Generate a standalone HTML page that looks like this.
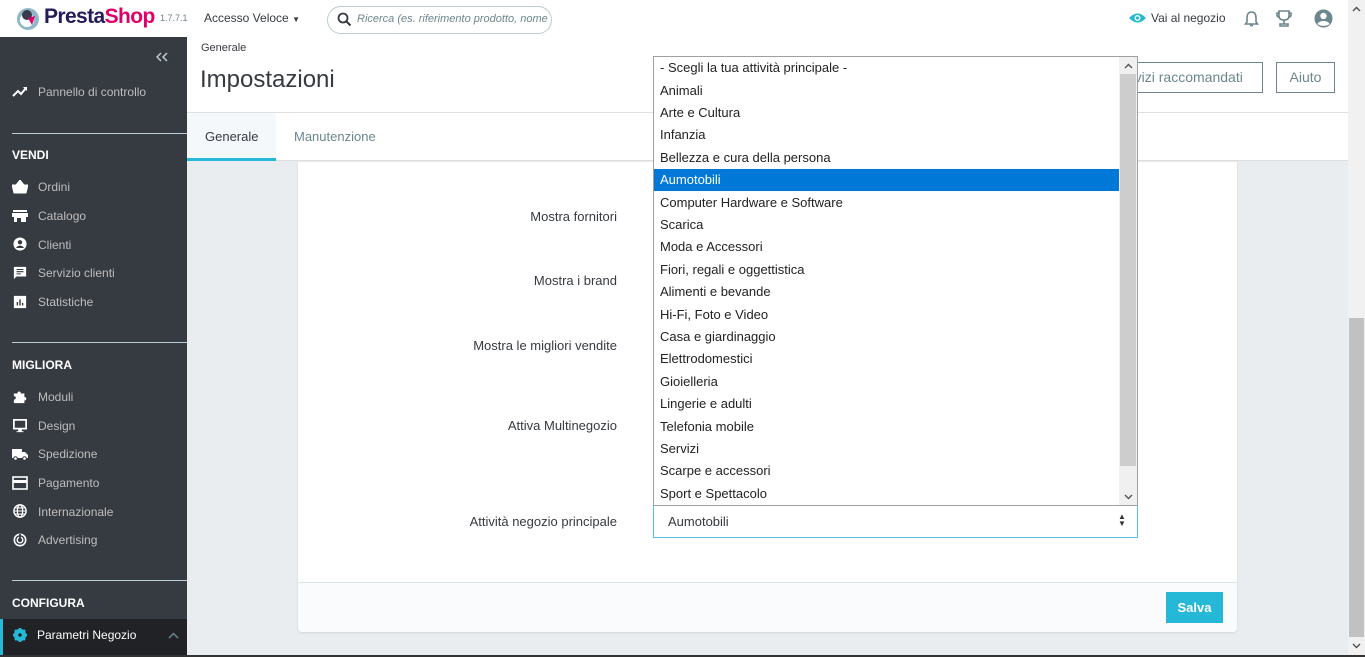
<!DOCTYPE html>
<html><head><meta charset="utf-8"><style>
*{box-sizing:border-box;margin:0;padding:0}
body{width:1365px;height:657px;overflow:hidden;position:relative;background:#eaedef;font-family:"Liberation Sans",sans-serif;color:#363a41}
.a{position:absolute}
.side{left:0;top:37px;width:187px;height:620px;background:#363a41}
.si{position:absolute;left:38px;font-size:12px;color:#bebebe}
.ic{position:absolute;left:12px;width:16px;height:14px;fill:#fff}
.sh{position:absolute;left:12px;font-size:12px;font-weight:bold;color:#fff}
.hr{position:absolute;left:12px;width:175px;height:1px;background:#bbcdd2}
.lab{position:absolute;right:748px;font-size:13px;color:#363a41;white-space:nowrap}
.dd{left:653px;top:56px;width:485px;height:450px;background:#fff;border:1px solid #a0a0a0}
.opt{position:absolute;left:6px;font-size:13px;color:#222;font-family:"Liberation Sans",sans-serif}
</style></head><body>
<div class="a" style="left:0;top:0;width:1348px;height:37px;background:#fff"></div>
<svg class="a" style="left:16px;top:7px" width="24" height="24" viewBox="0 0 24 24"><circle cx="12" cy="12" r="11" fill="#8fb8c7"/><circle cx="11" cy="13" r="7" fill="#fff"/><circle cx="11" cy="8" r="5" fill="#3a3a48"/><path d="M12 11 L19 9 L16 18 Z" fill="#df0067"/></svg>
<div class="a" style="left:44px;top:5px;font-size:21px;font-weight:bold;letter-spacing:-0.6px"><span style="color:#251b5b">Presta</span><span style="color:#df0067">Shop</span></div>
<div class="a" style="left:160px;top:13px;font-size:9px;color:#6c868e">1.7.7.1</div>
<div class="a" style="left:204px;top:11px;font-size:12px;color:#363a41">Accesso Veloce <span style="font-size:8px">▼</span></div>
<div class="a" style="left:327px;top:6px;width:225px;height:28px;border:1px solid #bbcdd2;border-radius:14px;background:#fff"></div>
<svg class="a" style="left:337px;top:12px" width="15" height="15" viewBox="0 0 15 15"><circle cx="6" cy="6" r="4.5" fill="none" stroke="#363a41" stroke-width="1.8"/><path d="M9.5 9.5 L13.5 13.5" stroke="#363a41" stroke-width="2"/></svg>
<div class="a" style="left:357px;top:13px;font-size:11px;font-style:italic;color:#6c868e;white-space:nowrap">Ricerca (es. riferimento prodotto, nome</div>
<svg class="a" style="left:1129px;top:12px" width="17" height="12" viewBox="0 0 17 12"><path d="M0 6 Q8.5 -3 17 6 Q8.5 15 0 6Z" fill="#25b9d7"/><circle cx="8.5" cy="6" r="3" fill="#fff"/><circle cx="8.5" cy="6" r="1.6" fill="#25b9d7"/></svg>
<div class="a" style="left:1151px;top:11px;font-size:12px;color:#363a41">Vai al negozio</div>
<svg class="a" style="left:1244px;top:10px" width="15" height="18" viewBox="0 0 15 18"><path d="M7.5 2 C4 2 3 5 3 8 V12 L1.5 14 H13.5 L12 12 V8 C12 5 11 2 7.5 2Z" fill="none" stroke="#6c868e" stroke-width="1.6"/><path d="M6 15.5 h3" stroke="#6c868e" stroke-width="1.6"/></svg>
<svg class="a" style="left:1276px;top:10px" width="16" height="18" viewBox="0 0 16 18"><path d="M3 1 H13 V6 C13 9 11 10 8 10 C5 10 3 9 3 6Z M3 3 H1 V5 C1 7 3 7 3 7 M13 3 H15 V5 C15 7 13 7 13 7 M8 10 V14 M4 16 H12 V14 H4Z" fill="none" stroke="#6c868e" stroke-width="1.6"/></svg>
<svg class="a" style="left:1314px;top:9px" width="19" height="19" viewBox="0 0 19 19"><circle cx="9.5" cy="9.5" r="9" fill="#6c868e"/><circle cx="9.5" cy="7" r="3.2" fill="#fff"/><path d="M3.5 15 C5 11 14 11 15.5 15 C13 17.5 6 17.5 3.5 15Z" fill="#fff"/></svg>
<div class="a side">
<svg class="a" style="left:156px;top:15px" width="12" height="10" viewBox="0 0 12 10"><path d="M5 1 L1 5 L5 9 M11 1 L7 5 L11 9" fill="none" stroke="#bbcdd2" stroke-width="1.5"/></svg>
<svg class="ic" style="top:48px" viewBox="0 0 16 14"><path d="M1 11 L6 6 L9 9 L14 3" fill="none" stroke="#fff" stroke-width="2"/><path d="M11 2 H15 V6Z" fill="#fff"/></svg>
<div class="si" style="top:48px">Pannello di controllo</div>
<div class="hr" style="top:96px"></div>
<div class="sh" style="top:111px">VENDI</div>
<svg class="ic" style="top:143px" viewBox="0 0 16 14"><path d="M0 5 H16 L14 13 H2Z M4 5 L8 0 L12 5" fill="#fff" stroke="#fff"/></svg><div class="si" style="top:143px">Ordini</div>
<svg class="ic" style="top:172px" viewBox="0 0 16 14"><path d="M1 1 H15 V3 H1Z M0 4 H16 V8 H14 V13 H9 V9 H5 V13 H2 V8 H0Z" fill="#fff"/></svg><div class="si" style="top:172px">Catalogo</div>
<svg class="ic" style="top:200px" viewBox="0 0 16 16"><circle cx="8" cy="8" r="7.5" fill="#fff"/><circle cx="8" cy="6" r="2.5" fill="#363a41"/><path d="M3.5 12.5 C5 9 11 9 12.5 12.5Z" fill="#363a41"/></svg><div class="si" style="top:201px">Clienti</div>
<svg class="ic" style="top:229px" viewBox="0 0 16 16"><path d="M1 1 H15 V12 H4 L1 15Z" fill="#fff"/><path d="M4 4 H12 M4 6.5 H12 M4 9 H9" stroke="#363a41" stroke-width="1.2"/></svg><div class="si" style="top:229px">Servizio clienti</div>
<svg class="ic" style="top:258px" viewBox="0 0 16 16"><rect x="1" y="1" width="14" height="14" fill="#fff"/><path d="M5 12 V8 M8 12 V5 M11 12 V9" stroke="#363a41" stroke-width="1.6"/></svg><div class="si" style="top:258px">Statistiche</div>
<div class="hr" style="top:305px"></div>
<div class="sh" style="top:321px">MIGLIORA</div>
<svg class="ic" style="top:353px" viewBox="0 0 16 16"><path d="M1 4 H5 C5 1 9 1 9 4 H13 V8 C16 8 16 12 13 12 V15 H1 V11 C4 11 4 7 1 7Z" fill="#fff"/></svg><div class="si" style="top:353px">Moduli</div>
<svg class="ic" style="top:382px" viewBox="0 0 16 16"><rect x="1" y="1" width="14" height="10" fill="none" stroke="#fff" stroke-width="2"/><path d="M6 12 H10 V14 H12 V15 H4 V14 H6Z" fill="#fff"/></svg><div class="si" style="top:382px">Design</div>
<svg class="ic" style="top:410px" viewBox="0 0 16 14"><path d="M0 2 H10 V11 H0Z M10 5 H13 L16 8 V11 H10Z" fill="#fff"/><circle cx="3.5" cy="11.5" r="1.8" fill="#fff" stroke="#363a41"/><circle cx="12.5" cy="11.5" r="1.8" fill="#fff" stroke="#363a41"/></svg><div class="si" style="top:410px">Spedizione</div>
<svg class="ic" style="top:439px" viewBox="0 0 16 14"><rect x="1" y="1" width="14" height="12" fill="none" stroke="#fff" stroke-width="1.6"/><rect x="1" y="4" width="14" height="3" fill="#fff"/></svg><div class="si" style="top:439px">Pagamento</div>
<svg class="ic" style="top:467px" viewBox="0 0 16 16"><circle cx="8" cy="8" r="7" fill="none" stroke="#fff" stroke-width="1.6"/><ellipse cx="8" cy="8" rx="3" ry="7" fill="none" stroke="#fff" stroke-width="1.4"/><path d="M1 8 H15 M2 4.5 H14 M2 11.5 H14" stroke="#fff" stroke-width="1.2"/></svg><div class="si" style="top:468px">Internazionale</div>
<svg class="ic" style="top:496px" viewBox="0 0 16 16"><circle cx="8" cy="8" r="6.5" fill="none" stroke="#fff" stroke-width="1.8"/><circle cx="8" cy="8" r="3.2" fill="none" stroke="#fff" stroke-width="1.6"/><path d="M8 8 V1" stroke="#363a41" stroke-width="2"/></svg><div class="si" style="top:496px">Advertising</div>
<div class="hr" style="top:543px"></div>
<div class="sh" style="top:559px">CONFIGURA</div>
<div class="a" style="left:0;top:582px;width:187px;height:36px;background:#202226"></div>
<div class="a" style="left:0;top:582px;width:3px;height:36px;background:#25b9d7"></div>
<svg class="ic" style="top:591px" viewBox="0 0 16 16"><circle cx="8" cy="8" r="5" fill="none" stroke="#25b9d7" stroke-width="4"/><path d="M8 0 V16 M0 8 H16 M2.3 2.3 L13.7 13.7 M13.7 2.3 L2.3 13.7" stroke="#25b9d7" stroke-width="3"/><circle cx="8" cy="8" r="2" fill="#202226"/></svg>
<div class="si" style="left:37px;top:591px;color:#fff">Parametri Negozio</div>
<svg class="a" style="left:168px;top:595px" width="11" height="7" viewBox="0 0 11 7"><path d="M1 6 L5.5 1.5 L10 6" fill="none" stroke="#6c868e" stroke-width="1.5"/></svg>
</div>
<div class="a" style="left:187px;top:37px;width:1161px;height:124px;background:#fff;border-bottom:1px solid #dfdfdf"></div>
<div class="a" style="left:187px;top:112px;width:1161px;height:1px;background:#dfdfdf"></div>
<div class="a" style="left:201px;top:42px;font-size:11px">Generale</div>
<div class="a" style="left:200px;top:66px;font-size:24px;color:#363a41">Impostazioni</div>
<div class="a" style="left:1110px;top:62px;width:153px;height:31px;border:1px solid #6c868e"></div>
<div class="a" style="left:1130px;top:69px;font-size:14px;color:#6c868e">rvizi raccomandati</div>
<div class="a" style="left:1276px;top:62px;width:59px;height:31px;border:1px solid #6c868e;color:#6c868e;font-size:14px;text-align:center;line-height:29px">Aiuto</div>
<div class="a" style="left:187px;top:113px;width:89px;height:48px;background:#f4f8fb;border-bottom:3px solid #25b9d7"></div>
<div class="a" style="left:205px;top:129px;font-size:13px">Generale</div>
<div class="a" style="left:294px;top:129px;font-size:13px;color:#6c868e">Manutenzione</div>
<div class="a" style="left:298px;top:162px;width:939px;height:470px;background:#fff;border-radius:0 0 4px 4px;box-shadow:0 1px 2px rgba(0,0,0,.1)"></div>
<div class="a" style="left:298px;top:582px;width:939px;height:50px;background:#fafbfc;border-top:1px solid #dbe6e9;border-radius:0 0 4px 4px"></div>
<div class="a" style="left:1166px;top:592px;width:57px;height:31px;background:#25b9d7;color:#fff;font-size:13px;font-weight:bold;text-align:center;line-height:31px">Salva</div>
<div class="lab" style="top:209px">Mostra fornitori</div>
<div class="lab" style="top:273px">Mostra i brand</div>
<div class="lab" style="top:338px">Mostra le migliori vendite</div>
<div class="lab" style="top:418px">Attiva Multinegozio</div>
<div class="lab" style="top:514px">Attività negozio principale</div>
<div class="a" style="left:653px;top:505px;width:485px;height:33px;border:1px solid #5bc0de;background:#fff"></div>
<div class="a" style="left:668px;top:514px;font-size:13px;color:#363a41">Aumotobili</div>
<div class="a" style="left:1118px;top:513px;font-size:8px;line-height:7px;color:#333">▲<br>▼</div>
<div class="a dd">
<div class="a" style="left:0;top:112px;width:465px;height:22px;background:#0078d7"></div>
<div class="opt" style="top:3px">- Scegli la tua attività principale -</div>
<div class="opt" style="top:26px">Animali</div>
<div class="opt" style="top:48px">Arte e Cultura</div>
<div class="opt" style="top:70px">Infanzia</div>
<div class="opt" style="top:93px">Bellezza e cura della persona</div>
<div class="opt" style="top:115px;color:#fff">Aumotobili</div>
<div class="opt" style="top:138px">Computer Hardware e Software</div>
<div class="opt" style="top:160px">Scarica</div>
<div class="opt" style="top:182px">Moda e Accessori</div>
<div class="opt" style="top:205px">Fiori, regali e oggettistica</div>
<div class="opt" style="top:227px">Alimenti e bevande</div>
<div class="opt" style="top:250px">Hi-Fi, Foto e Video</div>
<div class="opt" style="top:272px">Casa e giardinaggio</div>
<div class="opt" style="top:294px">Elettrodomestici</div>
<div class="opt" style="top:317px">Gioielleria</div>
<div class="opt" style="top:339px">Lingerie e adulti</div>
<div class="opt" style="top:362px">Telefonia mobile</div>
<div class="opt" style="top:384px">Servizi</div>
<div class="opt" style="top:406px">Scarpe e accessori</div>
<div class="opt" style="top:429px">Sport e Spettacolo</div>
<div class="a" style="left:465px;top:0;width:18px;height:448px;background:#f0f0f0"></div>
<div class="a" style="left:466px;top:17px;width:16px;height:392px;background:#cdcdcd"></div>
<svg class="a" style="left:470px;top:6px" width="9" height="6" viewBox="0 0 9 6"><path d="M1 5 L4.5 1.5 L8 5" fill="none" stroke="#555" stroke-width="1.4"/></svg>
<svg class="a" style="left:470px;top:437px" width="9" height="6" viewBox="0 0 9 6"><path d="M1 1 L4.5 4.5 L8 1" fill="none" stroke="#555" stroke-width="1.4"/></svg>
</div>
<div class="a" style="left:1348px;top:0;width:17px;height:655px;background:#f1f1f1"></div>
<div class="a" style="left:1349px;top:318px;width:15px;height:319px;background:#c1c1c1"></div>
<svg class="a" style="left:1352px;top:6px" width="9" height="6" viewBox="0 0 9 6"><path d="M1 5 L4.5 1.5 L8 5" fill="none" stroke="#505050" stroke-width="1.4"/></svg>
<svg class="a" style="left:1352px;top:643px" width="9" height="6" viewBox="0 0 9 6"><path d="M1 1 L4.5 4.5 L8 1" fill="none" stroke="#505050" stroke-width="1.4"/></svg>
<div class="a" style="left:0;top:655px;width:1365px;height:2px;background:#333"></div>
</body></html>
